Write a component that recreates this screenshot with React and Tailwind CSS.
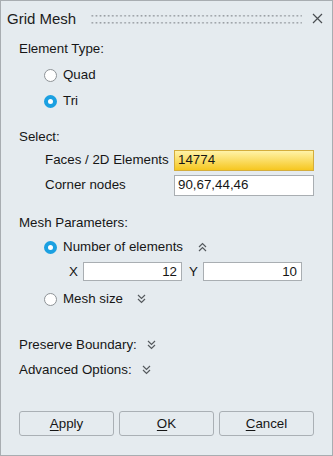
import React from "react";

function Radio({ checked }) {
  return checked ? (
    <span className="w-[13px] h-[13px] rounded-full border-[4px] border-[#1ba0e1] bg-white box-border shrink-0" />
  ) : (
    <span className="w-[13px] h-[13px] rounded-full border border-[#8e9397] bg-white box-border shrink-0" />
  );
}

function ChevUp() {
  return (
    <svg width="9" height="10" viewBox="0 0 9 10" className="shrink-0">
      <path d="M1 5 L4.5 1.5 L8 5 M1 9 L4.5 5.5 L8 9" fill="none" stroke="#555a5e" strokeWidth="1.2" />
    </svg>
  );
}

function ChevDown() {
  return (
    <svg width="9" height="10" viewBox="0 0 9 10" className="shrink-0">
      <path d="M1 1 L4.5 4.5 L8 1 M1 5 L4.5 8.5 L8 5" fill="none" stroke="#555a5e" strokeWidth="1.2" />
    </svg>
  );
}

export default function App() {
  return (
    <div className="w-[333px] h-[456px] box-border bg-[#e5ebef] border border-[#a8adb1] flex flex-col text-[13.33px] text-[#161616] font-['Liberation_Sans',Arial,sans-serif] leading-none">
      {/* Title bar */}
      <div className="h-[35px] flex items-center pl-[6px] pr-[9px]">
        <span className="text-[15px] text-[#1c1c1c]">Grid Mesh</span>
        <svg className="flex-1 ml-[15px] mr-[10px] h-[10px]" height="10">
          <defs>
            <pattern id="dots" width="4.1" height="7" patternUnits="userSpaceOnUse">
              <rect x="0.5" y="1" width="1.6" height="1.6" fill="#979ca1" />
              <rect x="0.5" y="7.6" width="1.6" height="1.6" fill="#979ca1" />
            </pattern>
          </defs>
          <rect x="0" y="0" width="100%" height="10" fill="url(#dots)" />
        </svg>
        <svg width="11" height="11" viewBox="0 0 11 11" className="shrink-0">
          <path d="M1 1 L10 10 M10 1 L1 10" stroke="#4a4e52" strokeWidth="1.2" />
        </svg>
      </div>

      <div className="flex flex-col flex-1 pl-[18px]">
        <div className="h-[26px] flex items-center">Element Type:</div>
        <div className="h-[26px] flex items-center pl-[25px]">
          <Radio />
          <span className="ml-[6px]">Quad</span>
        </div>
        <div className="h-[26px] flex items-center pl-[25px]">
          <Radio checked />
          <span className="ml-[6px]">Tri</span>
        </div>

        <div className="mt-[13px] h-[19px] flex items-center">Select:</div>
        <div className="mt-[3px] h-[22px] flex items-center">
          <span className="w-[155px] pl-[26px] shrink-0">Faces / 2D Elements</span>
          <div className="w-[140px] h-[21px] box-border border border-[#d4ad3c] bg-[linear-gradient(to_bottom,#fff3a8,#f6c720)] flex items-center pl-[3px]">
            14774
          </div>
        </div>
        <div className="mt-[3px] h-[22px] flex items-center">
          <span className="w-[155px] pl-[26px] shrink-0">Corner nodes</span>
          <div className="w-[140px] h-[21px] box-border border border-[#a9aeb2] bg-white flex items-center pl-[3px]">
            90,67,44,46
          </div>
        </div>

        <div className="mt-[17px] h-[19px] flex items-center">Mesh Parameters:</div>
        <div className="mt-[5px] h-[20px] flex items-center pl-[25px]">
          <Radio checked />
          <span className="ml-[6px] mr-[15px]">Number of elements</span>
          <ChevUp />
        </div>
        <div className="mt-[5px] h-[19px] flex items-center pl-[50px]">
          <span className="w-[14px] shrink-0">X</span>
          <div className="w-[99px] h-[19px] box-border border border-[#a9aeb2] bg-white flex items-center justify-end pr-[4px]">
            12
          </div>
          <span className="ml-[7px] w-[14px] shrink-0">Y</span>
          <div className="w-[99px] h-[19px] box-border border border-[#a9aeb2] bg-white flex items-center justify-end pr-[4px]">
            10
          </div>
        </div>
        <div className="mt-[8px] h-[20px] flex items-center pl-[25px]">
          <Radio />
          <span className="ml-[6px] mr-[14px]">Mesh size</span>
          <ChevDown />
        </div>

        <div className="mt-[26px] h-[20px] flex items-center">
          <span className="mr-[10px]">Preserve Boundary:</span>
          <ChevDown />
        </div>
        <div className="mt-[5px] h-[20px] flex items-center">
          <span className="mr-[10px]">Advanced Options:</span>
          <ChevDown />
        </div>

        <div className="mt-auto mb-[19px] flex gap-[5px]">
          <button className="w-[95px] h-[25px] box-border border border-[#aab0b5] rounded-[3px] bg-[#e5ebef] text-[13.33px] text-[#161616]">
            <span className="underline underline-offset-2">A</span>pply
          </button>
          <button className="w-[95px] h-[25px] box-border border border-[#aab0b5] rounded-[3px] bg-[#e5ebef] text-[13.33px] text-[#161616]">
            <span className="underline underline-offset-2">O</span>K
          </button>
          <button className="w-[95px] h-[25px] box-border border border-[#aab0b5] rounded-[3px] bg-[#e5ebef] text-[13.33px] text-[#161616]">
            <span className="underline underline-offset-2">C</span>ancel
          </button>
        </div>
      </div>
    </div>
  );
}
